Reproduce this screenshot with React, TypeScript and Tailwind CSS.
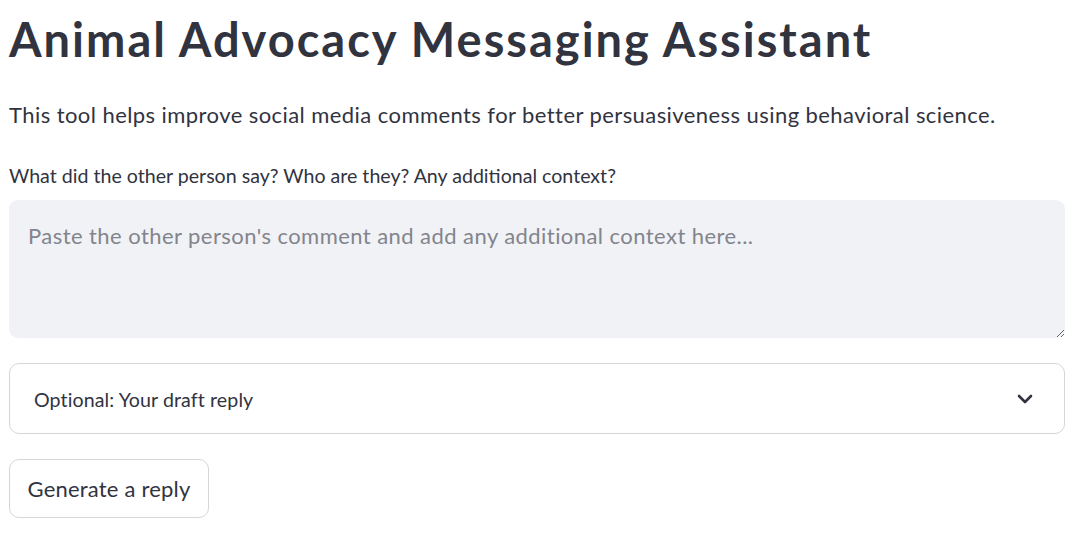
import React from 'react'

export default function App() {
  return (
    <div
      className="min-h-[540px] w-full bg-white pl-[9px] pr-[13px] pt-[9px] text-[#31333f]"
      style={{ fontFamily: 'Lato, "Noto Sans", sans-serif' }}
    >
      <h1 className="text-[47px] font-bold leading-[60px] tracking-[2px]">
        Animal Advocacy Messaging Assistant
      </h1>

      <p className="mt-[30px] text-[22px] leading-[32px] tracking-[0.43px]">
        This tool helps improve social media comments for better persuasiveness using behavioral science.
      </p>

      <label className="mt-[33px] block text-[19.6px] leading-[24px]">
        What did the other person say? Who are they? Any additional context?
      </label>

      <textarea
        className="mt-[12px] block h-[138px] w-full resize-y rounded-[9px] bg-[#f0f2f6] px-[19px] pt-[20px] text-[22px] leading-[32px] tracking-[0.44px] outline-none placeholder:text-[#83848c]"
        placeholder="Paste the other person's comment and add any additional context here..."
      />

      <div className="mt-[25px] flex h-[71px] items-center justify-between rounded-[10px] border border-[#d6d6d9] pl-6 pr-[31px]">
        <span className="pt-[2px] text-[19.6px] tracking-[0.1px]">Optional: Your draft reply</span>
        <svg width="16" height="10" viewBox="0 0 16 10" fill="none">
          <path d="M2 2l6 6 6-6" stroke="#31333f" strokeWidth="2.6" strokeLinecap="round" strokeLinejoin="round" />
        </svg>
      </div>

      <button className="mt-[25px] flex h-[59px] w-[200px] items-center justify-center rounded-[10px] border border-[#d6d6d9] bg-white text-[22px] tracking-[0.2px]">
        Generate a reply
      </button>
    </div>
  )
}
